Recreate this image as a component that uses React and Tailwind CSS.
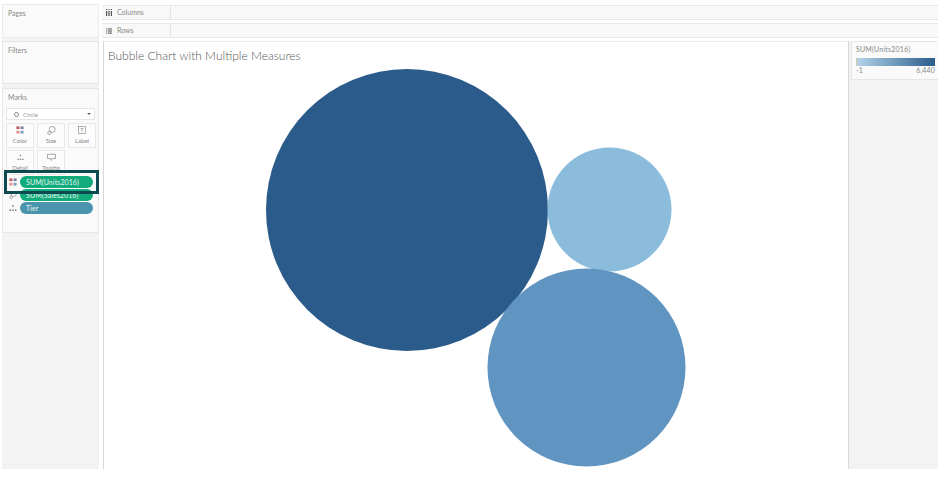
import React from "react";

function ColorIcon({ className }) {
  return (
    <svg viewBox="0 0 10 10" className={className}>
      <rect x="0.5" y="0.5" width="3.8" height="3.4" fill="#c2595f" />
      <rect x="5.7" y="0.5" width="3.8" height="3.4" fill="#7f7fa6" />
      <rect x="0.5" y="6" width="3.8" height="3.4" fill="#e88d92" />
      <rect x="5.7" y="6" width="3.8" height="3.4" fill="#7d9cc0" />
    </svg>
  );
}

function SizeIcon({ className }) {
  return (
    <svg viewBox="0 0 10 10" fill="none" stroke="#777" strokeWidth="0.7" className={className}>
      <circle cx="5.8" cy="3.8" r="3.3" />
      <circle cx="2.6" cy="7.6" r="1.8" fill="#fafafa" />
    </svg>
  );
}

function LabelIcon({ className }) {
  return (
    <svg viewBox="0 0 10 10" fill="none" stroke="#777" strokeWidth="0.7" className={className}>
      <rect x="0.6" y="0.6" width="8.8" height="8.8" />
      <path d="M3.2 3h3.6M5 3v4.2" />
    </svg>
  );
}

function DetailIcon({ className }) {
  return (
    <svg viewBox="0 0 10 10" fill="#777" className={className}>
      <circle cx="5" cy="2.2" r="1.1" />
      <circle cx="1.6" cy="7.6" r="1.1" />
      <circle cx="5" cy="7.6" r="1.1" />
      <circle cx="8.4" cy="7.6" r="1.1" />
    </svg>
  );
}

function TooltipIcon({ className }) {
  return (
    <svg viewBox="0 0 10 10" fill="none" stroke="#777" strokeWidth="0.7" className={className}>
      <path d="M0.6 1.4h8.8v4.8H6.2L4.6 8.2V6.2H0.6z" />
    </svg>
  );
}

function MarkButton({ icon, label }) {
  return (
    <div className="flex h-[25px] w-[28px] flex-col items-center border border-[#e8e8e8] bg-[#fcfcfc] pt-[1px]">
      <div className="flex h-[10px] items-center">{icon}</div>
      <span className="mt-[2px] text-[6px] leading-[7px] text-[#888]">{label}</span>
    </div>
  );
}

function Pill({ icon, label, color }) {
  return (
    <div className="flex h-[12px] items-center">
      <div className="flex w-[14px] justify-center">{icon}</div>
      <div className={`flex h-[12px] w-[73px] items-center rounded-full pl-[6px] text-[7px] leading-none tracking-[0.1px] text-[#e8f5f0] ${color}`}>
        {label}
      </div>
    </div>
  );
}

function Shelf({ icon, label }) {
  return (
    <div className="flex h-[15px] items-center border-y border-[#e8e8e8] bg-[#f8f8f8]">
      <div className="flex h-full w-[69px] items-center border-r border-[#e4e4e4] pl-[4px]">
        {icon}
        <span className="ml-[5px] text-[7px] text-[#888]">{label}</span>
      </div>
    </div>
  );
}

export default function App() {
  return (
    <div className="relative h-[479px] w-[938px] overflow-hidden bg-white font-['Lato',sans-serif]">
      <div className="ml-[2px] flex h-[469px] pt-[4px]">
        {/* left rail */}
        <div className="flex w-[97px] flex-col bg-[#f3f3f3]">
          <div className="h-[34px] border border-[#ebebeb] bg-[#fafafa] pt-[4px] pl-[5px] text-[7px] leading-[9px] text-[#888]">
            Pages
          </div>
          <div className="mt-[3px] h-[43px] border border-[#e6e6e6] bg-[#fafafa] pt-[4px] pl-[5px] text-[7px] leading-[9px] text-[#888]">
            Filters
          </div>
          <div className="mt-[4px] h-[145px] border border-[#e6e6e6] bg-[#fafafa] pt-[4px] pl-[3px]">
            <div className="pl-[2px] text-[7px] leading-[9px] text-[#888]">Marks</div>
            <div className="mt-[6px] flex h-[12px] w-[89px] items-center justify-between border border-[#e4e4e4] bg-white px-[7px]">
              <span className="flex items-center gap-[4px] text-[6px] text-[#999]">
                <span className="h-[5px] w-[5px] rounded-full border border-[#888]" />
                Circle
              </span>
              <span className="mr-[-4px] border-x-[2px] border-t-[2px] border-x-transparent border-t-[#666]" />
            </div>
            <div className="mt-[3px] grid w-[91px] grid-cols-3 gap-x-[2px] gap-y-[2px]">
              <MarkButton icon={<ColorIcon className="h-[8px] w-[8px]" />} label="Color" />
              <MarkButton icon={<SizeIcon className="h-[9px] w-[9px]" />} label="Size" />
              <MarkButton icon={<LabelIcon className="h-[8px] w-[8px]" />} label="Label" />
              <MarkButton icon={<DetailIcon className="h-[7px] w-[7px]" />} label="Detail" />
              <MarkButton icon={<TooltipIcon className="h-[9px] w-[9px]" />} label="Tooltip" />
            </div>
            <div className="mt-[1px] flex flex-col gap-[1px]">
              <Pill icon={<ColorIcon className="h-[8px] w-[8px]" />} label="SUM(Units2016)" color="bg-[#12ab7c]" />
              <Pill icon={<SizeIcon className="h-[8px] w-[8px]" />} label="SUM(Sales2016)" color="bg-[#12ab7c]" />
              <Pill icon={<DetailIcon className="h-[8px] w-[8px]" />} label="Tier" color="bg-[#4a94ad]" />
            </div>
          </div>
          <div className="mt-[3px] flex-1 bg-[#f3f3f3]" />
        </div>

        <div className="ml-[3px] flex flex-1 flex-col">
          {/* shelves */}
          <div className="flex flex-col gap-[3px] pt-[1px]">
            <Shelf
              label="Columns"
              icon={
                <svg viewBox="0 0 6 7" fill="#555" className="h-[7px] w-[6px]">
                  <rect x="0" y="0" width="1.2" height="1" />
                  <rect x="0" y="2" width="1.2" height="5" />
                  <rect x="2.4" y="0" width="1.2" height="1" />
                  <rect x="2.4" y="2" width="1.2" height="5" />
                  <rect x="4.8" y="0" width="1.2" height="1" />
                  <rect x="4.8" y="2" width="1.2" height="5" />
                </svg>
              }
            />
            <Shelf
              label="Rows"
              icon={
                <svg viewBox="0 0 7 6" fill="#555" className="h-[6px] w-[6px]">
                  <rect x="0" y="0" width="1" height="1.2" />
                  <rect x="2" y="0" width="5" height="1.2" />
                  <rect x="0" y="2.4" width="1" height="1.2" />
                  <rect x="2" y="2.4" width="5" height="1.2" />
                  <rect x="0" y="4.8" width="1" height="1.2" />
                  <rect x="2" y="4.8" width="5" height="1.2" />
                </svg>
              }
            />
          </div>

          <div className="mt-[3px] flex flex-1">
            {/* canvas */}
            <div className="ml-[1px] w-[746px] border-x border-t border-x-[#d8d8d8] border-t-[#eeeeee] bg-white">
              <div className="pt-[6px] pl-[4px] text-[12px] leading-[15px] font-light text-[#555]">
                Bubble Chart with Multiple Measures
              </div>
              <svg width="744" height="406" viewBox="0 0 744 406" className="block">
                <circle cx="303" cy="147" r="141" fill="#2a5b8a" />
                <circle cx="505.5" cy="146.5" r="62" fill="#8bbcdc" />
                <circle cx="482.5" cy="304.5" r="99" fill="#6095c2" />
              </svg>
            </div>

            {/* legend rail */}
            <div className="flex-1 bg-[#f3f3f3] pl-[2px]">
              <div className="h-[39px] border border-r-0 border-[#e6e6e6] bg-[#fafafa] pt-[3px] pl-[4px]">
                <div className="text-[7px] leading-[9px] tracking-[0.2px] text-[#888]">SUM(Units2016)</div>
                <div className="mt-[4px] h-[8px] w-[79px] bg-[linear-gradient(to_right,#cfc9a8_0%,#b0d2e8_3%,#2a5b8a_100%)]" />
                <div className="flex w-[79px] justify-between text-[7px] leading-[9px] tracking-[0.2px] text-[#888]">
                  <span>-1</span>
                  <span>6,440</span>
                </div>
              </div>
            </div>
          </div>
        </div>
      </div>

      {/* highlight box over the first pill */}
      <div className="absolute top-[170px] left-[4px] h-[24px] w-[95px] border-[3px] border-[#0d4a4f]" />
    </div>
  );
}
